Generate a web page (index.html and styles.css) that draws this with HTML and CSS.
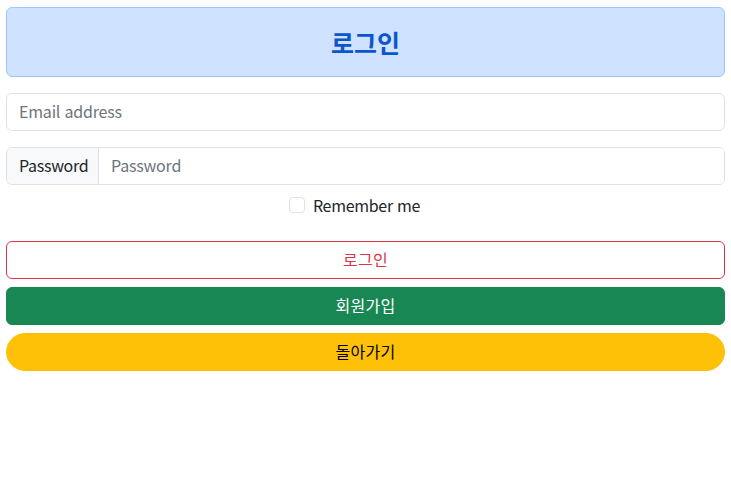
FILE: index.html
```html
<!DOCTYPE html>
<html lang="ko">
<head>
<meta charset="utf-8">
<link rel="stylesheet" href="styles.css">
</head>
<body>
<main class="wrap">
  <div class="alert"><h3 class="title">로그인</h3></div>
  <input class="field" type="email" placeholder="Email address">
  <div class="group">
    <span class="group-text">Password</span>
    <input class="group-input" type="password" placeholder="Password">
  </div>
  <div class="check">
    <span class="box"></span>
    <label class="check-label">Remember me</label>
  </div>
  <div class="buttons">
    <button class="btn btn-danger">로그인</button>
    <button class="btn btn-success">회원가입</button>
    <button class="btn btn-warning">돌아가기</button>
  </div>
</main>
</body>
</html>
```
FILE: styles.css
```css
* { box-sizing: border-box; }
body {
  margin: 0;
  font-family: "Noto Sans CJK KR", "Noto Sans", sans-serif;
  font-size: 16px;
  color: #212529;
  background: #fff;
}
.wrap {
  padding: 7px 6px 0;
  display: flex;
  flex-direction: column;
}
.alert {
  height: 70px;
  background: #cfe2ff;
  border: 1px solid #9ec5fe;
  border-radius: 6px;
  display: flex;
  align-items: center;
  justify-content: center;
}
.title {
  margin: 0;
  font-size: 25px;
  font-weight: 700;
  color: #0b55cf;
  line-height: 1;
}
.field, .group-input {
  font-family: inherit;
  font-size: 16px;
  color: #212529;
  outline: none;
  letter-spacing: -0.2px;
}
.field::placeholder, .group-input::placeholder { color: #6c757d; }
.field {
  margin-top: 16px;
  height: 38px;
  border: 1px solid #dee2e6;
  border-radius: 6px;
  padding: 0 12px 2px;
}
.group {
  margin-top: 16px;
  height: 38px;
  display: flex;
  border: 1px solid #dee2e6;
  border-radius: 6px;
  overflow: hidden;
}
.group-text {
  display: flex;
  align-items: center;
  padding: 0 12px 2px;
  background: #f8f9fa;
  border-right: 1px solid #dee2e6;
  width: 92px;
  letter-spacing: -0.3px;
}
.group-input {
  flex: 1;
  border: 0;
  padding: 0 12px 2px;
}
.check {
  margin-top: 11px;
  display: flex;
  align-items: center;
  justify-content: center;
  gap: 8px;
  height: 18px;
  padding-right: 22px;
}
.check-label {
  letter-spacing: -0.3px;
  padding-bottom: 1px;
}
.box {
  width: 16px;
  height: 16px;
  border: 1px solid #dee2e6;
  border-radius: 4px;
  background: #fff;
}
.buttons {
  margin-top: 27px;
  display: flex;
  flex-direction: column;
  gap: 8px;
}
.btn {
  height: 38px;
  border-radius: 6px;
  font-family: inherit;
  font-size: 16px;
  border: 1px solid transparent;
  padding: 0 12px 2px;
  letter-spacing: 0.3px;
}
.btn-danger { background: #fff; border-color: #dc3545; color: #dc3545; }
.btn-success { background: #198754; border-color: #198754; color: #fff; }
.btn-warning { background: #ffc107; border-color: #ffc107; color: #000; border-radius: 50rem; }
```
